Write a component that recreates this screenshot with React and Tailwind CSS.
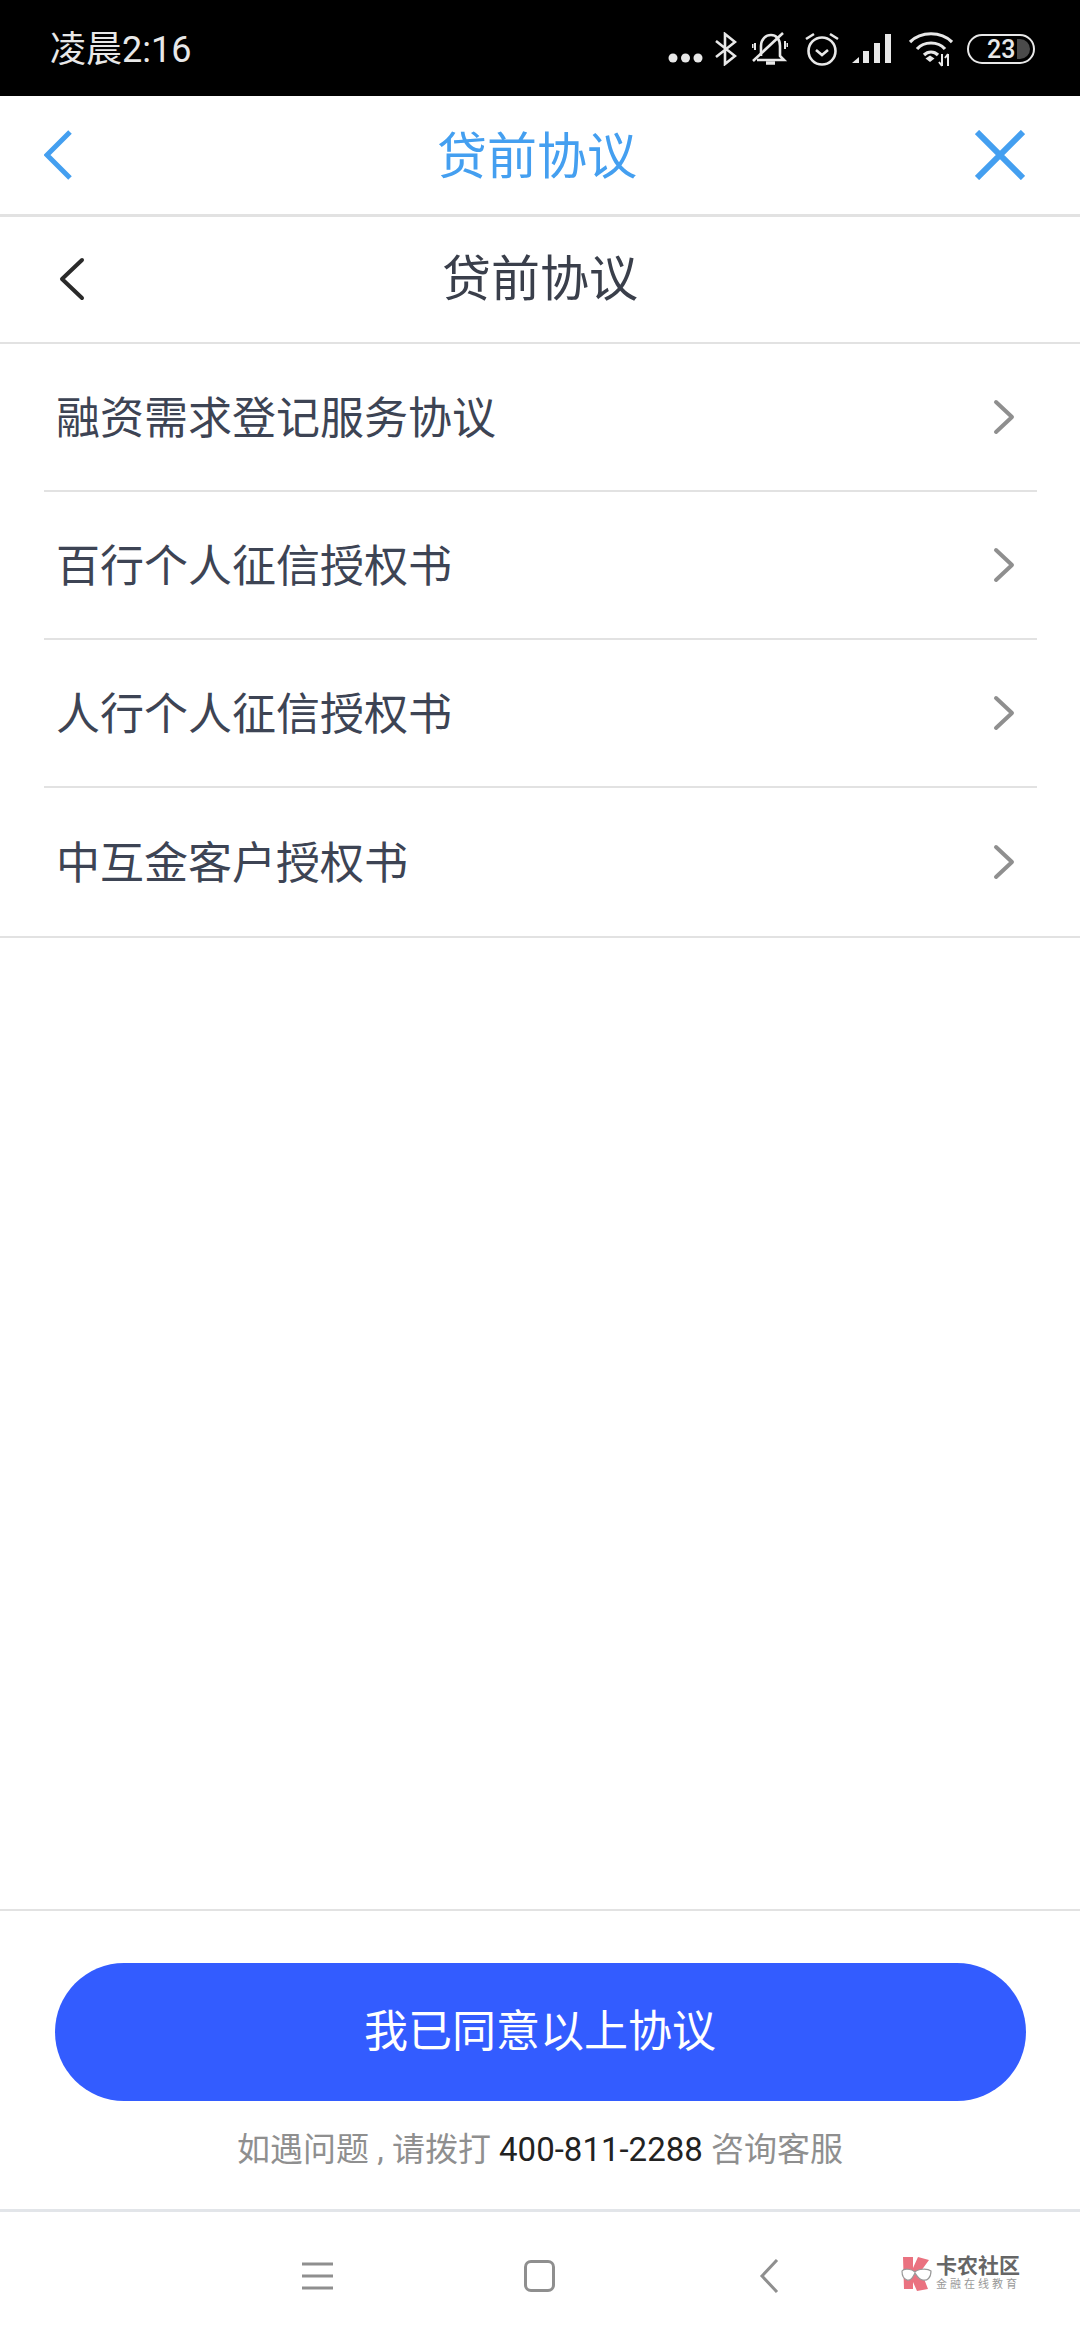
const cjk = "font-['Roboto','Noto_Sans_CJK_SC',sans-serif]";

const rows = ['融资需求登记服务协议', '百行个人征信授权书', '人行个人征信授权书', '中互金客户授权书'];

const StatusIcons = () => (
  <div className="flex items-center">
    {/* three dots */}
    <svg width="35" height="12" viewBox="0 0 35 12" fill="#e8e8e8" className="mt-[18px]">
      <circle cx="5" cy="6" r="4.5" /><circle cx="17.5" cy="6" r="4.5" /><circle cx="30" cy="6" r="4.5" />
    </svg>
    {/* bluetooth */}
    <svg width="22" height="34" viewBox="0 0 22 34" fill="none" stroke="#e8e8e8" strokeWidth="2.6" className="ml-[12px]">
      <path d="M1 9 L20 24 L10 32 V2 L20 10 L1 25" />
    </svg>
    {/* muted bell */}
    <svg width="36" height="34" viewBox="0 0 36 34" fill="none" stroke="#e8e8e8" strokeWidth="2.6" className="ml-[15px]">
      <path d="M9 24 V14 C9 7 14 3 19 3 C24 3 28 7 28 14 V24 L32 28 H5" />
      <path d="M1 29 L31 1" />
      <path d="M14 31 H23" strokeWidth="3.5" />
      <path d="M3 11 V18 M33 9 V17 M35.5 11 V15 M0.5 12 V16" strokeWidth="2" />
    </svg>
    {/* alarm */}
    <svg width="36" height="34" viewBox="0 0 36 34" fill="none" stroke="#e8e8e8" strokeWidth="2.6" className="ml-[16px]">
      <circle cx="18" cy="19" r="13.5" />
      <path d="M12 18 L18 23 L24 18" />
      <path d="M2 7 L10 2 M26 2 L34 7" />
    </svg>
    {/* signal */}
    <svg width="40" height="30" viewBox="0 0 40 30" fill="#e8e8e8" className="ml-[12px]">
      <path d="M0 29 L7 23 V29 Z" />
      <rect x="11" y="17" width="6" height="12" />
      <rect x="22" y="9" width="6" height="20" />
      <rect x="33" y="0" width="6" height="29" />
    </svg>
    {/* wifi with arrows */}
    <svg width="44" height="36" viewBox="0 0 44 36" fill="none" stroke="#e8e8e8" strokeWidth="3.2" className="ml-[17px]">
      <path d="M1 11 C12 0 32 0 43 11" />
      <path d="M8 18 C15 10 29 10 36 18" />
      <path d="M15 24 C19 20 25 20 29 24" />
      <path d="M16.5 27.5 L21 24.5 L25.5 27.5 L21 31 Z" fill="#e8e8e8" stroke="none" />
      <path d="M33 23 V35 M30 31 L33 35 M39 35 V23 M36 27 L39 23" strokeWidth="2" />
    </svg>
    {/* battery */}
    <div className="ml-[14px] flex h-[30px] w-[68px] items-center justify-between rounded-full border-[2.5px] border-[#e8e8e8] pl-[18px] pr-[3px]">
      <span className="text-[25px] leading-none font-medium text-[#e8e8e8]">23</span>
      <span className="h-[20px] w-[13px] rounded-r-full bg-[#4a4a4a]" />
    </div>
  </div>
);

const LogoMark = () => (
  <svg width="34" height="36" viewBox="0 0 34 36" className="shrink-0">
    <path d="M3 1 H13 V12 L18 1 L29 4 L21 15 L28 33 L17 35 L13 26 V33 H4 Z" fill="#ea7280" />
    <path d="M2 15 C4 12 12 13 15 16 C18 13 27 12 31 15 C31 22 27 25 23 24 C19 24 17 20 15 17 C13 21 11 25 7 24 C4 23 2 20 2 15 Z" fill="#fff" stroke="#999" strokeWidth="1.2" />
  </svg>
);

export default function App() {
  return (
    <div className={`${cjk} flex h-[2340px] w-[1080px] flex-col overflow-hidden bg-white`}>
      {/* status bar */}
      <div className="flex h-[96px] shrink-0 items-center justify-between bg-black pl-[50px] pr-[45px] pt-[2px]">
        <span className="pt-[1px] text-[36px] leading-none text-[#e8e8e8]">凌晨2:16</span>
        <StatusIcons />
      </div>

      {/* webview title */}
      <div className="flex h-[121px] shrink-0 items-center justify-between border-b-[3px] border-[#e2e2e2] pl-[44px] pr-[55px]">
        <div className="w-[55px]">
          <svg width="28" height="50" viewBox="0 0 28 50" fill="none" stroke="#449ff0" strokeWidth="5">
            <path d="M26 2 L3 25 L26 48" />
          </svg>
        </div>
        <span className="pt-[3px] text-[50px] leading-none text-[#449ff0]">贷前协议</span>
        <svg width="50" height="50" viewBox="0 0 50 50" fill="none" stroke="#449ff0" strokeWidth="6">
          <path d="M2 2 L48 48 M48 2 L2 48" />
        </svg>
      </div>

      {/* page title */}
      <div className="relative flex h-[127px] shrink-0 items-center justify-center border-b-2 border-[#e2e2e2]">
        <svg width="26" height="44" viewBox="0 0 26 44" fill="none" stroke="#2a2a2a" strokeWidth="4" strokeLinecap="round" strokeLinejoin="round" className="absolute left-[59px] top-[40px]">
          <path d="M23 3 L3 22 L23 41" />
        </svg>
        <span className="text-[49px] leading-none text-[#3a3f4b]">贷前协议</span>
      </div>

      {/* agreements */}
      <div className="shrink-0 border-b-2 border-[#e2e2e2]">
        {rows.map((label, i) => (
          <div key={label} className={`ml-[44px] mr-[43px] flex h-[148px] items-center justify-between pl-[12px] pr-[22px] ${i < rows.length - 1 ? 'border-b-2 border-[#e2e2e2]' : ''}`}>
            <span className="pt-[4px] text-[44px] leading-none text-[#3d4454]">{label}</span>
            <svg width="22" height="36" viewBox="0 0 22 36" fill="none" stroke="#8f8f8f" strokeWidth="4" strokeLinecap="round" strokeLinejoin="round">
              <path d="M3 3 L19 18 L3 33" />
            </svg>
          </div>
        ))}
      </div>

      <div className="flex-1" />

      {/* agree */}
      <div className="flex h-[300px] shrink-0 flex-col items-center border-t-2 border-[#e2e2e2] pt-[52px]">
        <button className="flex h-[138px] w-[971px] shrink-0 items-center justify-center rounded-full bg-[#335cff] text-[44px] leading-none text-white">
          我已同意以上协议
        </button>
        <div className="mt-[32px] flex items-center text-[33px] leading-none text-[#8f8f8f]">
          如遇问题 , 请拨打&nbsp;<span className="text-[#222]">400-811-2288</span>&nbsp;咨询客服
        </div>
      </div>

      {/* system nav */}
      <div className="relative flex h-[131px] shrink-0 items-center border-t-[3px] border-[#e2e5e9] pl-[302px]">
        <svg width="31" height="28" viewBox="0 0 31 28" fill="none" stroke="#8f8f8f" strokeWidth="3">
          <path d="M0 2 H31 M0 14 H31 M0 26 H31" />
        </svg>
        <div className="ml-[191px] h-[32px] w-[31px] rounded-[7px] border-[3px] border-[#8f8f8f]" />
        <svg width="20" height="34" viewBox="0 0 20 34" fill="none" stroke="#8f8f8f" strokeWidth="3" className="ml-[204px]">
          <path d="M18 1 L3 17 L18 33" />
        </svg>
        <div className="absolute left-[900px] top-[43px] flex items-center gap-[2px]">
          <LogoMark />
          <div className="flex flex-col">
            <span className="text-[21px] leading-[23px] font-bold text-[#666]">卡农社区</span>
            <span className="text-[11px] leading-[14px] tracking-[3px] text-[#999]">金融在线教育</span>
          </div>
        </div>
      </div>
    </div>
  );
}
